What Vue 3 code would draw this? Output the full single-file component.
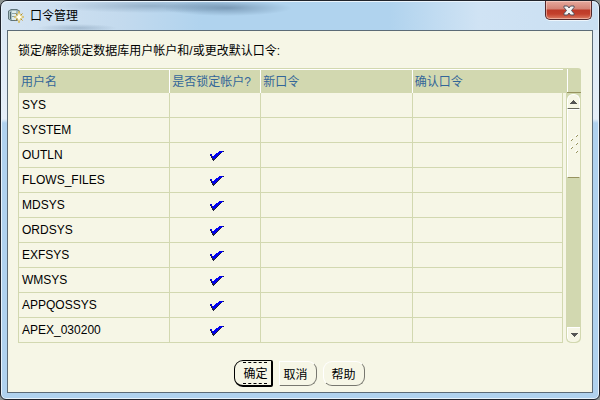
<script setup>
import { ref } from 'vue';

const users = ref([
  { name: 'SYS', locked: false, password: '', confirm: '' },
  { name: 'SYSTEM', locked: false, password: '', confirm: '' },
  { name: 'OUTLN', locked: true, password: '', confirm: '' },
  { name: 'FLOWS_FILES', locked: true, password: '', confirm: '' },
  { name: 'MDSYS', locked: true, password: '', confirm: '' },
  { name: 'ORDSYS', locked: true, password: '', confirm: '' },
  { name: 'EXFSYS', locked: true, password: '', confirm: '' },
  { name: 'WMSYS', locked: true, password: '', confirm: '' },
  { name: 'APPQOSSYS', locked: true, password: '', confirm: '' },
  { name: 'APEX_030200', locked: true, password: '', confirm: '' }
]);
</script>

<template>
  <div class="window">
    <header class="titlebar">
      <svg class="app-icon" width="16" height="16" viewBox="0 0 16 16" aria-hidden="true">
        <path d="M0 3 L3 1 H9 L12 3 V11 L9 13 H3 L0 11Z" fill="#5f7479" />
        <path d="M1 3 L4 2 H8 L11 3 V11 L8 12 H4 L1 11Z" fill="#a9c0c2" />
        <path d="M4 3H8V12H4Z" fill="#dfeceb" />
        <path d="M2.500 4V11" stroke="#4f676c" />
        <path d="M4 5.500H9M4 8.500H9" stroke="#8ba5a8" />
        <path d="M11 3 L12.500 7.500 L16 9 L12.500 10.500 L11 15 L9.500 10.500 L6 9 L9.500 7.500Z" fill="#fffef0" stroke="#d3b64e" stroke-width=".8" />
        <path d="M7.500 5.500L9 7M14.500 5.500L13 7M7.500 12.500L9 11M14.500 12.500L13 11" stroke="#b98f22" />
      </svg>
      <h1>口令管理</h1>
      <button class="close-button" aria-label="关闭">
        <svg width="12" height="11" viewBox="0 0 12 11">
          <path d="M1 1H4.500L6 3L7.500 1H11V2.500L8.500 5.500L11 8.500V10H7.500L6 8L4.500 10H1V8.500L3.500 5.500L1 2.500Z" fill="#f4f4f4" stroke="#53525e" />
        </svg>
      </button>
    </header>

    <main class="content">
      <p class="prompt">锁定/解除锁定数据库用户帐户和/或更改默认口令:</p>

      <div class="grid">
        <div class="table-area">
          <table>
            <colgroup>
              <col>
              <col class="lock-col">
              <col>
              <col>
            </colgroup>
            <thead>
              <tr>
                <th>用户名</th>
                <th>是否锁定帐户?</th>
                <th>新口令</th>
                <th>确认口令</th>
              </tr>
            </thead>
            <tbody>
              <tr v-for="user in users" :key="user.name">
                <td>{{ user.name }}</td>
                <td>
                  <label class="lock">
                    <input v-model="user.locked" type="checkbox" :aria-label="'锁定 ' + user.name">
                    <svg v-if="user.locked" width="14" height="10" viewBox="0 0 14 10" shape-rendering="crispEdges">
                      <path d="M0 3H2V5H4V4H5V3H6V2H8V1H9V0H14V1H12V2H11V3H10V4H9V5H8V6H7V7H6V8H5V9H4V10H3V9H2V7H1V5H0Z" fill="#22223a" />
                      <path d="M0 3H2V5H4V4H5V3H6V2H8V1H9V0H13V1H12V2H10V3H9V4H8V5H7V6H6V7H5V8H3V7H2V5H1V4H0Z" fill="#0000f0" />
                    </svg>
                  </label>
                </td>
                <td><input v-model="user.password" class="password" type="password" :aria-label="user.name + ' 新口令'"></td>
                <td><input v-model="user.confirm" class="password" type="password" :aria-label="user.name + ' 确认口令'"></td>
              </tr>
            </tbody>
          </table>
        </div>
        <div class="side">
          <div class="corner"></div>
          <div class="scrollbar">
            <button class="arrow up" aria-label="向上滚动">
              <svg width="7" height="4" viewBox="0 0 7 4" shape-rendering="crispEdges">
                <path d="M3 0H4V1H5V2H6V3H7V4H0V3H1V2H2V1H3Z" fill="#555" />
              </svg>
            </button>
            <div class="thumb">
              <svg width="9" height="20" viewBox="0 0 9 20">
                <path d="M6 2L8 0M1 6L3 4M6 10L8 8M1 14L3 12M6 18L8 16" stroke="#fff" />
                <path d="M7 3L9 1M2 7L4 5M7 11L9 9M2 15L4 13M7 19L9 17" stroke="#97935f" />
              </svg>
            </div>
            <button class="arrow down" aria-label="向下滚动">
              <svg width="7" height="4" viewBox="0 0 7 4" shape-rendering="crispEdges">
                <path d="M0 0H7V1H6V2H5V3H4V4H3V3H2V2H1V1H0Z" fill="#555" />
              </svg>
            </button>
          </div>
        </div>
      </div>

      <div class="actions">
        <button class="action primary"><span>确定</span></button>
        <button class="action cancel"><span>取消</span></button>
        <button class="action help"><span>帮助</span></button>
      </div>
    </main>
  </div>
</template>

<style>
body {
  background: #8b9290;
}
</style>

<style scoped>
* {
  box-sizing: border-box;
}

.window {
  display: flex;
  flex-direction: column;
  min-height: 100vh;
  padding: 0 6px 6px;
  border: 1px solid #20242c;
  border-radius: 7px 7px 6px 6px;
  background: linear-gradient(180deg, #d9e7f4 0, #e6eff8 118px, #b0d2ee 122px, #b0d2ee 100%);
  box-shadow: inset 0 0 0 1px #e8f3fb;
  font-family: "Liberation Sans", "Noto Sans CJK SC", sans-serif;
  font-size: 12px;
  line-height: 16px;
  color: #000;
}

.titlebar {
  display: flex;
  align-items: center;
  height: 29px;
  margin: 0 -5px;
  padding: 0 6px;
  border-radius: 6px 6px 0 0;
  background:
    radial-gradient(ellipse 65px 8px at 225px 7px, rgba(75, 105, 135, .5), transparent),
    radial-gradient(ellipse 100px 7px at 150px 5px, rgba(75, 105, 135, .35), transparent),
    radial-gradient(ellipse 40px 4px at 75px 27px, rgba(75, 105, 135, .3), transparent),
    linear-gradient(90deg, #d5e4f2 0, #c3daee 120px, #b0d3ee 200px, #b0d3ee 65%, #d0e3f4 80%, #c9dff2 100%);
  box-shadow: inset 0 1px 0 #eaf4fc;
}

.app-icon {
  margin-right: 6px;
}

h1 {
  margin: 0;
  font-size: 12px;
  font-weight: normal;
}

button {
  font: inherit;
  color: inherit;
}

.close-button {
  display: flex;
  align-self: flex-start;
  align-items: center;
  justify-content: center;
  width: 47px;
  height: 19px;
  margin-left: auto;
  padding: 0;
  border: 1px solid #53272a;
  border-top: 0;
  border-radius: 0 0 5px 5px;
  background: linear-gradient(180deg, #e6a99d 0, #d48375 8px, #bd3a28 9px, #c3402c 13px, #dc7c63 100%);
  box-shadow: inset 0 0 0 1px rgba(255, 225, 215, .5), 0 1px 0 #eef6fc;
}

.content {
  flex: 1;
  padding: 12px 11px 5px 10px;
  border: 1px solid #5c6b76;
  background: #f6f6e6;
}

.prompt {
  margin: 0 0 9px;
}

.grid {
  display: flex;
}

.table-area {
  flex: 1;
  border-top: 1px solid #d2d8b0;
  border-top-left-radius: 3px;
}

table {
  width: 100%;
  table-layout: fixed;
  border-collapse: separate;
  border-spacing: 0;
}

.lock-col {
  width: 91px;
}

th,
td {
  height: 25px;
  padding: 0 3px;
  text-align: left;
  font-weight: normal;
  white-space: nowrap;
}

th {
  height: 24px;
  padding: 0 2px;
  border-top: 1px solid #fff;
  border-left: 1px solid #fff;
  background: #d2d8b0;
  color: #336699;
}

th:first-child {
  border-left-color: #d2d8b0;
}

td {
  border-left: 1px solid #d2d8b0;
  border-bottom: 1px solid #d2d8b0;
}

td:last-child {
  border-right: 1px solid #d2d8b0;
}

.lock {
  display: flex;
  align-items: center;
  justify-content: center;
  height: 24px;
  padding: 2px 0 0 4px;
}

.lock input {
  appearance: none;
  width: 0;
  height: 0;
  margin: 0;
}

.password {
  display: block;
  width: 100%;
  height: 20px;
  padding: 0;
  border: 0;
  outline: 0;
  background: transparent;
  font: inherit;
}

.side {
  display: flex;
  flex-direction: column;
  width: 18px;
}

.corner {
  height: 25px;
  border-top: 1px solid #d2d8b0;
  border-top-right-radius: 3px;
  background:
    linear-gradient(90deg, transparent 4px, #97935f 4px) bottom / 100% 1px no-repeat,
    linear-gradient(90deg, #d2d8b0 4px, #fff 4px, #fff 5px, #d2d8b0 5px);
}

.scrollbar {
  display: flex;
  flex: 1;
  flex-direction: column;
  margin-left: 3px;
  padding: 1px;
  border-radius: 0 0 5px 5px;
  background: #d2d8b0;
}

.arrow {
  display: flex;
  align-items: center;
  justify-content: center;
  height: 15px;
  padding: 0;
  border: 1px solid #fff;
  background: #f6f6e6;
}

.up {
  border-bottom-color: #66665c;
  border-radius: 6px 6px 0 0;
}

.down {
  margin-top: auto;
  border-right: 0;
  border-bottom: 0;
  border-radius: 0 0 5px 5px;
}

.thumb {
  display: flex;
  align-items: center;
  justify-content: center;
  height: 69px;
  border: 1px solid #fff;
  border-right-color: #f6f6e6;
  border-bottom-color: #97935f;
  background: #f6f6e6;
}

.actions {
  display: flex;
  align-items: center;
  justify-content: center;
  gap: 6px;
  margin-top: 17px;
}

.action {
  height: 25px;
  padding: 0 5px;
  border: 1px solid #fff;
  border-right-color: #77776f;
  border-bottom-color: #77776f;
  background: #f6f6e6;
}

.action span {
  display: block;
  padding-top: 2px;
  line-height: 20px;
}

.primary {
  height: 27px;
  padding: 0 4px 0 8px;
  border: 1px solid #000;
  border-right-width: 2px;
  border-bottom-width: 2px;
  border-radius: 9px 2px 2px 9px;
}

.primary span {
  padding-top: 2px;
  line-height: 18px;
  border-top: 1px dashed #000;
  border-bottom: 1px dashed #000;
}

.cancel {
  padding: 0 8px 0 3px;
  border-radius: 0 9px 9px 0;
}

.help {
  padding: 0 8px;
  border-radius: 9px;
}
</style>
